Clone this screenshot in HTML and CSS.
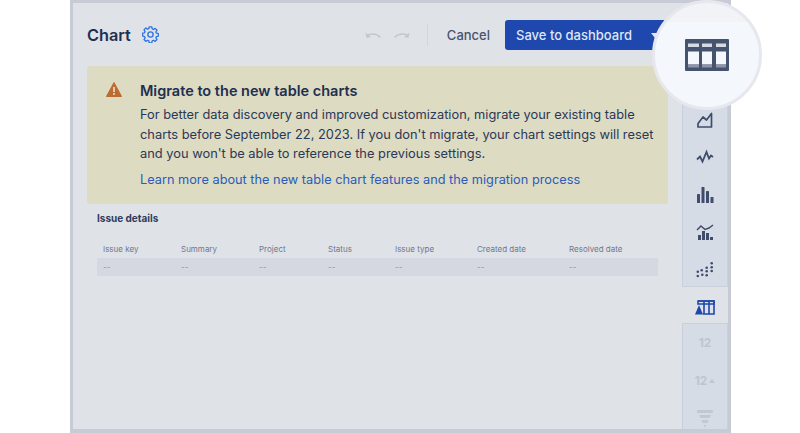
FILE: index.html
```html
<!DOCTYPE html>
<html lang="en">
<head>
<meta charset="utf-8">
<title>Chart</title>
<link rel="stylesheet" href="styles.css">
</head>
<body>
<div class="frame">
  <main class="main">
    <header class="top">
      <h1 class="title">Chart</h1>
      <svg class="gear" viewBox="0 0 18 18" width="17" height="17"><path d="M7.600 1h2.800l.4 2.100 1.300.6 1.800-1.200 2 2-1.200 1.800.6 1.300 2.100.4v2.800l-2.100.4-.6 1.300 1.200 1.800-2 2-1.800-1.200-1.300.6-.4 2.100H7.600l-.4-2.100-1.300-.6-1.800 1.200-2-2 1.200-1.800-.6-1.300L.6 10.400V7.600l2.100-.4.6-1.300-1.200-1.800 2-2 1.800 1.200 1.300-.6z" fill="none" stroke="#2f72e4" stroke-width="1.400" stroke-linejoin="round"/><circle cx="9" cy="9" r="2.800" fill="none" stroke="#2f72e4" stroke-width="1.400"/></svg>
      <div class="actions">
        <svg class="hist" viewBox="0 0 16 10" width="16" height="10"><path d="M15.500 7.500C12 4 7 3.500 3 5" fill="none" stroke="#c3c7d0" stroke-width="1.500"/><path d="M0.500 2.500 1.500 8 6 7z" fill="#c3c7d0"/></svg>
        <svg class="hist" viewBox="0 0 16 10" width="16" height="10"><path d="M.5 7.500C4 4 9 3.500 13 5" fill="none" stroke="#c3c7d0" stroke-width="1.500"/><path d="M15.500 2.500 14.500 8 10 7z" fill="#c3c7d0"/></svg>
        <span class="sep"></span>
        <span class="cancel">Cancel</span>
        <span class="save">Save to dashboard<i class="caret"></i></span>
      </div>
    </header>
    <section class="notice">
      <svg class="warn" viewBox="0 0 16 15" width="16" height="15"><path d="M8 0.500 15.600 14.500H.4z" fill="#bc6c33" stroke="#bc6c33" stroke-linejoin="round"/><rect x="7.100" y="5" width="1.800" height="5" fill="#dddbc2"/><rect x="7.100" y="11" width="1.800" height="1.800" fill="#dddbc2"/></svg>
      <div class="notice-body">
        <h2 class="notice-title">Migrate to the new table charts</h2>
        <p class="notice-text">For better data discovery and improved customization, migrate your existing table charts before September 22, 2023. If you don't migrate, your chart settings will reset and you won't be able to reference the previous settings.</p>
        <a class="notice-link">Learn more about the new table chart features and the migration process</a>
      </div>
    </section>
    <section class="details">
      <h3 class="details-title">Issue details</h3>
      <div class="tbl head">
        <span>Issue key</span><span>Summary</span><span>Project</span><span>Status</span><span>Issue type</span><span>Created date</span><span>Resolved date</span>
      </div>
      <div class="tbl row">
        <span>--</span><span>--</span><span>--</span><span>--</span><span>--</span><span>--</span><span>--</span>
      </div>
    </section>
  </main>
  <aside class="side">
    <div class="group upper">
      <svg viewBox="0 0 18 18" width="18" height="18"><path d="M2 16V12.500L7 6 10.500 9 15.500 2.500V16Z" fill="none" stroke="#3f4d6b" stroke-width="1.700" stroke-linejoin="round"/></svg>
      <svg viewBox="0 -2 18 18" width="18" height="18"><path d="M1 9.500 4 6.500 6.500 11.500 10.500 2 13 8.500 15 5.500 17 7" fill="none" stroke="#3f4d6b" stroke-width="1.800"/></svg>
      <svg viewBox="0 0 18 18" width="18" height="18"><g fill="#3f4d6b"><rect x="1" y="8" width="3" height="9" rx=".6"/><rect x="5.500" y="1" width="3" height="16" rx=".6"/><rect x="10" y="5" width="3" height="12" rx=".6"/><rect x="14.500" y="11" width="3" height="6" rx=".6"/></g></svg>
      <svg viewBox="0 0 18 18" width="18" height="18"><path d="M1 7 5 3 9 6.500 13 5 17 2" fill="none" stroke="#3f4d6b" stroke-width="1.500"/><g fill="#3f4d6b"><rect x="2" y="12" width="3" height="5"/><rect x="6" y="8" width="3" height="9"/><rect x="10" y="10" width="3" height="7"/><rect x="14" y="14" width="3" height="3"/></g></svg>
      <svg viewBox="0 0 18 18" width="18" height="18"><g fill="#3f4d6b"><circle cx="1.800" cy="10.700" r="1.300"/><circle cx="1.800" cy="15" r="1.300"/><circle cx="5.700" cy="9.300" r="1.300"/><circle cx="6.300" cy="13.700" r="1.300"/><circle cx="10.700" cy="6.700" r="1.300"/><circle cx="10.700" cy="10.300" r="1.300"/><circle cx="10.700" cy="14.300" r="1.300"/><circle cx="15.700" cy="2.300" r="1.300"/><circle cx="15.700" cy="6.300" r="1.300"/><circle cx="15.700" cy="10" r="1.300"/></g></svg>
    </div>
    <div class="selected">
      <svg viewBox="0 0 20 15" width="20" height="15"><path d="M3 1h16v13H8" fill="none" stroke="#1e48ad" stroke-width="1.600"/><path d="M3 1h16v3H3zM9 1v13M14 1v13" fill="none" stroke="#1e48ad" stroke-width="1.600"/><path d="M4 5 8 14.500H0z" fill="#1e48ad"/></svg>
    </div>
    <div class="group lower">
      <span class="num">12</span>
      <span class="num">12<i class="tri"></i></span>
      <svg viewBox="0 0 16 18" width="16" height="18"><g fill="#c3c7d0"><rect x="0" y="0" width="16" height="3" rx="1"/><path d="M2 5h12l-1.500 3h-9z"/><path d="M4.500 10h7l-1 3h-5z"/><path d="M6.500 15h3l-1.500 2.500z"/></g></svg>
    </div>
  </aside>
  <div class="lens">
    <svg viewBox="0 0 44 32" width="44" height="32"><rect width="44" height="32" rx="1" fill="#45536f"/><g fill="#d5dae4"><rect x="3" y="4.500" width="11" height="3.500"/><rect x="17" y="4.500" width="10" height="3.500"/><rect x="31" y="4.500" width="10" height="3.500"/></g><g fill="#f4f7fc"><rect x="3" y="12.500" width="11" height="13"/><rect x="17" y="12.500" width="10" height="13"/><rect x="31" y="12.500" width="10" height="13"/></g><g fill="#8d96a9"><rect x="3" y="25.500" width="11" height="3"/><rect x="17" y="25.500" width="10" height="3"/><rect x="31" y="25.500" width="10" height="3"/></g></svg>
  </div>
</div>
</body>
</html>
```
FILE: styles.css
```css
* { box-sizing: border-box; }
html, body { margin: 0; padding: 0; height: 100%; background: #fff; overflow: hidden; }
body { font-family: Inter, "Liberation Sans", sans-serif; color: #24304f; }
.frame {
  position: relative;
  margin-left: 70px;
  width: 661px;
  height: 433px;
  display: flex;
  background: #dfe2e7;
  border: solid #c6cbd5;
  border-width: 3px 3px 4px 3px;
}
.main { flex: 1; min-width: 0; padding: 0 14px; display: flex; flex-direction: column; }
.top { height: 63px; display: flex; align-items: center; }
.title { margin: 0; font-size: 16.300px; font-weight: 600; color: #212f50; }
.gear { margin-left: 11px; }
.actions { margin-left: auto; display: flex; align-items: center; }
.hist { margin-right: 13px; }
.sep { width: 1px; height: 22px; background: #d2d6de; margin-left: 4px; margin-right: 19px; }
.cancel { font-size: 13px; font-weight: 500; color: #46536f; }
.save {
  position: relative;
  margin-left: 15px;
  margin-right: -12px;
  width: 175px;
  height: 30px;
  padding-left: 11px;
  background: #1e48ad;
  border-radius: 3px 0 0 3px;
  color: #dfe6f4;
  font-size: 13px;
  font-weight: 500;
  line-height: 30px;
}
.caret {
  position: absolute;
  left: 146px;
  top: 13px;
  width: 0;
  height: 0;
  border: 4px solid transparent;
  border-top: 5px solid #dfe6f4;
  border-bottom: 0;
}
.notice {
  display: flex;
  height: 138px;
  background: #dddbc2;
  border-radius: 3px;
  padding: 16px 16px 0 19px;
}
.warn { flex: none; }
.notice-body { margin-left: 18px; }
.notice-title { margin: 0 0 5px; font-size: 14.500px; line-height: 18px; font-weight: 600; color: #212f50; }
.notice-text { margin: 0 0 6px; font-size: 12.850px; line-height: 19.500px; color: #2b3857; width: 530px; }
.notice-link { display: block; font-size: 12.750px; line-height: 20px; color: #2a5bbd; }
.details { padding: 0 10px; }
.details-title { margin: 7px 0 16px; font-size: 10px; line-height: 14px; font-weight: 700; color: #2f3c5a; }
.tbl { display: grid; grid-template-columns: 78px 78px 69px 67px 82px 92px 1fr; padding-left: 6px; font-size: 8px; }
.head { height: 17px; line-height: 16px; color: #70788d; }
.row { height: 18px; line-height: 18px; background: #d5d8e0; color: #8d93a4; }
.side { width: 46px; flex: none; margin-top: 60px; display: flex; flex-direction: column; }
.group { display: flex; flex-direction: column; align-items: center; background: #d6dce6; border-left: 1px solid #c9d0dc; border-right: 1px solid #c9d0dc; }
.upper { height: 224px; padding-top: 48px; gap: 19.400px; border-bottom: 1px solid #c9d0dc; }
.selected { height: 36px; padding-top: 4px; display: flex; align-items: center; justify-content: center; }
.lower { flex: 1; border-top: 1px solid #c9d0dc; padding-top: 11px; gap: 22.500px; }
.num { font-size: 12px; font-weight: 700; color: #bfc4ce; line-height: 15px; height: 15px; }
.tri { display: inline-block; width: 0; height: 0; margin-left: 2px; vertical-align: 2px; border: 3px solid transparent; border-top: 0; border-bottom: 4px solid #bfc4ce; }
.lens {
  position: absolute;
  left: 579px;
  top: -3px;
  width: 110px;
  height: 110px;
  border-radius: 50%;
  background: linear-gradient(#f1f3f6 0 18%, #f4f8fd 18%);
  border: 3px solid #e6e8ee;
  display: flex;
  align-items: center;
  justify-content: center;
}
```
